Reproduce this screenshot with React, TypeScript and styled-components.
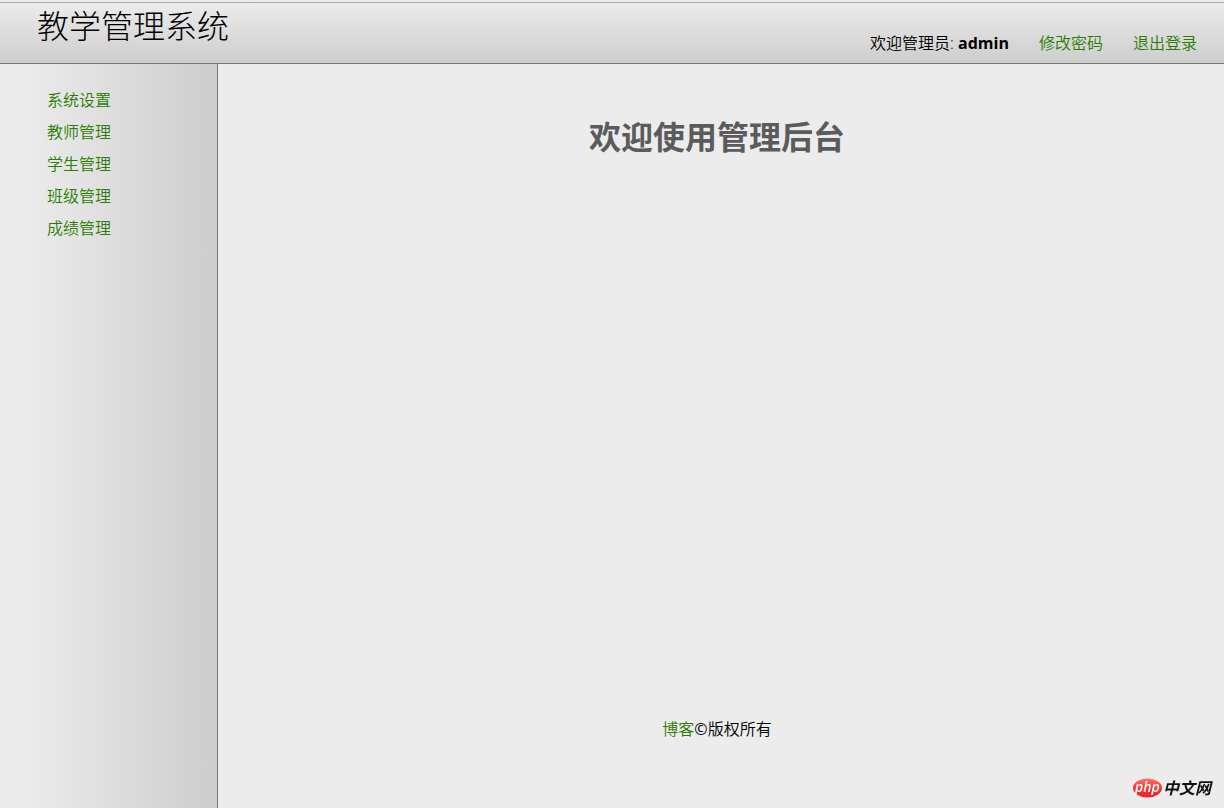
import React from "react";
import styled, { createGlobalStyle } from "styled-components";

const GlobalStyle = createGlobalStyle`
  * { box-sizing: border-box; }
  body {
    margin: 0;
    background: #ececec;
    color: #000;
    font-family: "Open Sans", "Noto Sans CJK SC", sans-serif;
    font-size: 16px;
    font-weight: 350;
    line-height: 24px;
  }
`;

const Page = styled.div`
  display: flex;
  flex-direction: column;
  min-height: 100vh;
  padding-top: 2px;
`;

const Header = styled.header`
  display: flex;
  justify-content: space-between;
  align-items: flex-start;
  height: 62px;
  padding: 0 27px 0 37px;
  border-top: 1px solid #aaa;
  border-bottom: 1px solid #777;
  background: linear-gradient(to bottom, #ececec, #cdcdcd);
`;

const SiteTitle = styled.h1`
  margin: 0;
  font-size: 32px;
  font-weight: 300;
  line-height: 46px;
`;

const UserBar = styled.nav`
  display: flex;
  gap: 30px;
  padding-top: 28px;
`;

const Welcome = styled.span`
  strong { font-weight: 700; }
`;

const TextLink = styled.a`
  color: #2a7d00;
  text-decoration: none;
`;

const Columns = styled.div`
  display: flex;
  flex: 1;
`;

const Sidebar = styled.nav`
  flex: 0 0 218px;
  padding: 20px 20px 20px 47px;
  border-right: 1px solid #777;
  background: linear-gradient(to right, #ececec 10%, #cdcdcd);
`;

const Menu = styled.ul`
  margin: 0;
  padding: 0;
  list-style: none;
  line-height: 32px;
`;

const Main = styled.main`
  display: flex;
  flex: 1;
  flex-direction: column;
  align-items: center;
  padding: 48px 8px 67px 0;
`;

const Heading = styled.h2`
  margin: 0;
  color: #5b5b5b;
  font-size: 32px;
  font-weight: 700;
  line-height: 50px;
`;

const Footer = styled.footer`
  margin-top: auto;
`;

const Copyright = styled.span`
  font-weight: 400;
`;

const Watermark = styled.svg`
  position: fixed;
  right: 8px;
  bottom: 8px;
  width: 84px;
  height: 24px;
`;

const menuItems = ["系统设置", "教师管理", "学生管理", "班级管理", "成绩管理"];

function SiteLogo() {
  return (
    <Watermark viewBox="0 0 84 24" role="img" aria-label="php中文网">
      <defs>
        <linearGradient id="badge" x1="0" y1="0" x2="0" y2="1">
          <stop offset="0" stopColor="#ff7468" />
          <stop offset="0.45" stopColor="#f83a3a" />
          <stop offset="1" stopColor="#ee2026" />
        </linearGradient>
      </defs>
      <ellipse cx="15.5" cy="12" rx="14.5" ry="9.5" fill="url(#badge)" />
      <text x="3" y="16" fill="#fff" fontFamily="Open Sans, sans-serif" fontSize="14" fontStyle="italic" fontWeight="600">
        php
      </text>
      <text x="31" y="18" fill="#111" fontFamily="Noto Sans CJK SC, sans-serif" fontSize="16" fontStyle="italic" fontWeight="700">
        中文网
      </text>
    </Watermark>
  );
}

export default function App() {
  return (
    <Page>
      <GlobalStyle />
      <Header>
        <SiteTitle>教学管理系统</SiteTitle>
        <UserBar>
          <Welcome>
            欢迎管理员: <strong>admin</strong>
          </Welcome>
          <TextLink href="#password">修改密码</TextLink>
          <TextLink href="#logout">退出登录</TextLink>
        </UserBar>
      </Header>
      <Columns>
        <Sidebar>
          <Menu>
            {menuItems.map((item) => (
              <li key={item}>
                <TextLink href="#main">{item}</TextLink>
              </li>
            ))}
          </Menu>
        </Sidebar>
        <Main id="main">
          <Heading>欢迎使用管理后台</Heading>
          <Footer>
            <TextLink href="#blog">博客</TextLink>
            <Copyright>©</Copyright>版权所有
          </Footer>
        </Main>
      </Columns>
      <SiteLogo />
    </Page>
  );
}
